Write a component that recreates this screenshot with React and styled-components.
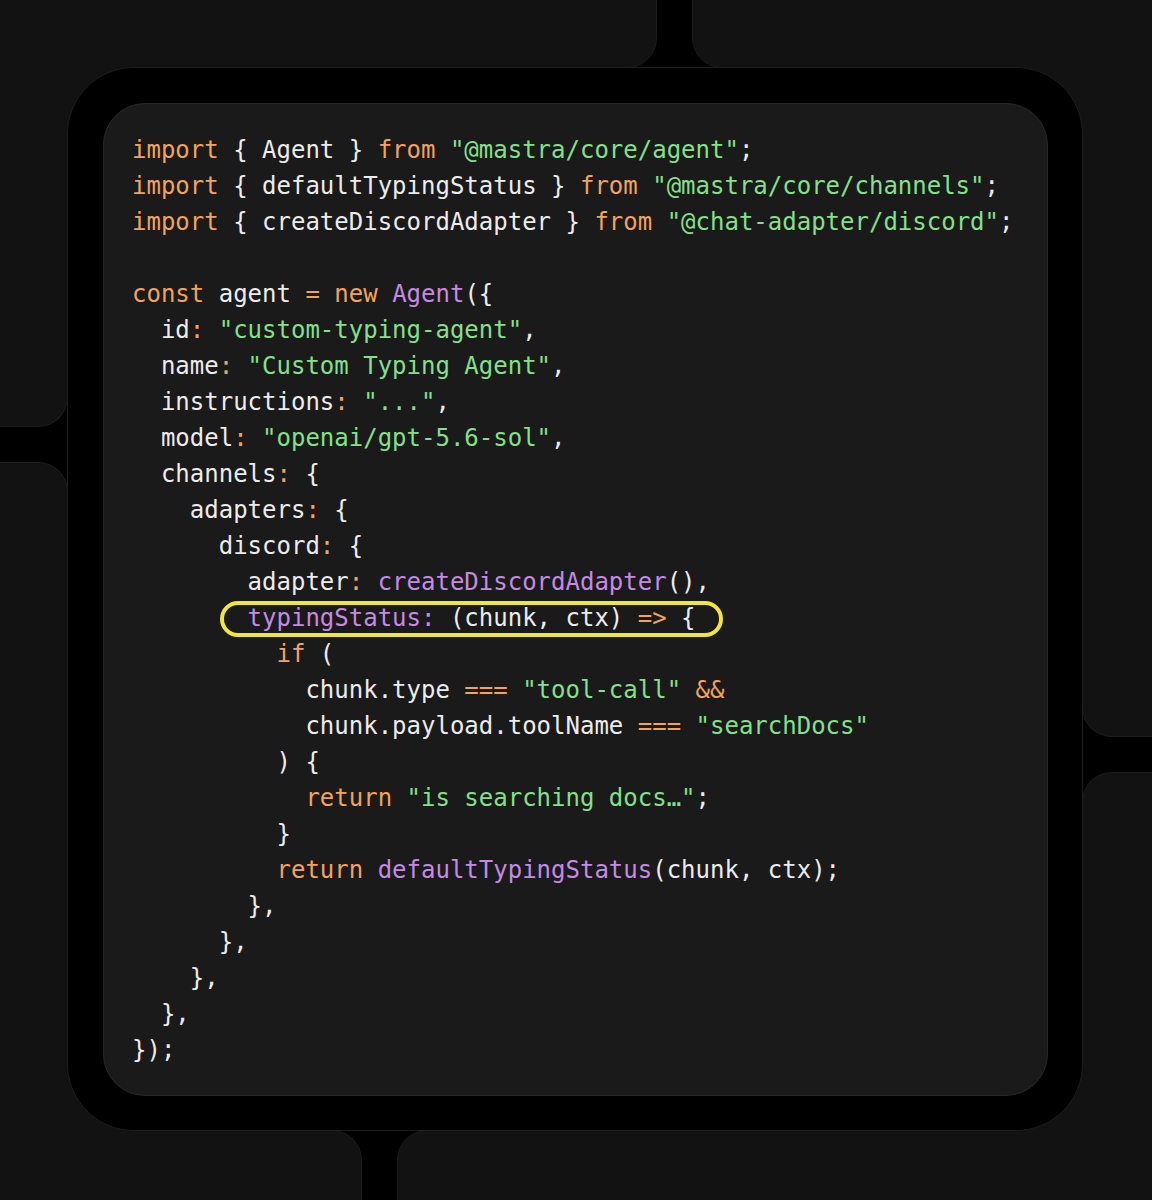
import React from 'react'
import styled, { createGlobalStyle, css } from 'styled-components'

const GlobalStyle = createGlobalStyle`
  html, body {
    margin: 0;
    padding: 0;
    background: #000;
  }
`

// each line of the snippet, as [kind, text] tokens
const code = [
  [['k', 'import'], ['p', ' { Agent } '], ['k', 'from'], ['p', ' '], ['s', '"@mastra/core/agent"'], ['p', ';']],
  [['k', 'import'], ['p', ' { defaultTypingStatus } '], ['k', 'from'], ['p', ' '], ['s', '"@mastra/core/channels"'], ['p', ';']],
  [['k', 'import'], ['p', ' { createDiscordAdapter } '], ['k', 'from'], ['p', ' '], ['s', '"@chat-adapter/discord"'], ['p', ';']],
  [],
  [['k', 'const'], ['p', ' agent '], ['k', '='], ['p', ' '], ['k', 'new'], ['p', ' '], ['f', 'Agent'], ['p', '({']],
  [['p', '  id'], ['k', ':'], ['p', ' '], ['s', '"custom-typing-agent"'], ['p', ',']],
  [['p', '  name'], ['k', ':'], ['p', ' '], ['s', '"Custom Typing Agent"'], ['p', ',']],
  [['p', '  instructions'], ['k', ':'], ['p', ' '], ['s', '"..."'], ['p', ',']],
  [['p', '  model'], ['k', ':'], ['p', ' '], ['s', '"openai/gpt-5.6-sol"'], ['p', ',']],
  [['p', '  channels'], ['k', ':'], ['p', ' {']],
  [['p', '    adapters'], ['k', ':'], ['p', ' {']],
  [['p', '      discord'], ['k', ':'], ['p', ' {']],
  [['p', '        adapter'], ['k', ':'], ['p', ' '], ['f', 'createDiscordAdapter'], ['p', '(),']],
  'highlight',
  [['p', '          '], ['k', 'if'], ['p', ' (']],
  [['p', '            chunk.type '], ['k', '==='], ['p', ' '], ['s', '"tool-call"'], ['p', ' '], ['k', '&&']],
  [['p', '            chunk.payload.toolName '], ['k', '==='], ['p', ' '], ['s', '"searchDocs"']],
  [['p', '          ) {']],
  [['p', '            '], ['k', 'return'], ['p', ' '], ['s', '"is searching docs…"'], ['p', ';']],
  [['p', '          }']],
  [['p', '          '], ['k', 'return'], ['p', ' '], ['f', 'defaultTypingStatus'], ['p', '(chunk, ctx);']],
  [['p', '        },']],
  [['p', '      },']],
  [['p', '    },']],
  [['p', '  },']],
  [['p', '});']],
]

const tiles = [
  { area: '1 / 1 / 2 / 5', m: '-40px 0 0 -40px', r: '30px' },
  { area: '2 / 1 / 3 / 2', m: '-2px 0 0 -40px', r: '0 0 30px 0', cut: 'top' },
  { area: '1 / 6 / 2 / 8', m: '-40px -40px 0 0', r: '30px' },
  { area: '2 / 7 / 5 / 8', m: '-2px -40px 0 0', r: '0 0 0 30px', cut: 'top' },
  { area: '7 / 1 / 8 / 3', m: '0 0 -40px -40px', r: '30px' },
  { area: '4 / 1 / 7 / 2', m: '0 0 -2px -40px', r: '0 30px 0 0', cut: 'bottom' },
  { area: '7 / 4 / 8 / 8', m: '0 -40px -40px 0', r: '30px' },
  { area: '6 / 7 / 7 / 8', m: '0 -40px -2px 0', r: '30px 0 0 0', cut: 'bottom' },
]

export default function App() {
  return (
    <>
      <GlobalStyle />
      <Page>
        {tiles.map((t, i) => (
          <Tile key={i} $area={t.area} $m={t.m} $r={t.r} $cut={t.cut} />
        ))}
        <FrameCell>
          <Frame>
            <Card>
              {code.map((line, i) =>
                line === 'highlight' ? (
                  <Line key={i}>
                    {'        '}
                    <Ring>
                      <Token $kind="f">typingStatus:</Token>
                      <Token $kind="p"> (chunk, ctx) </Token>
                      <Token $kind="k">=&gt;</Token>
                      <Token $kind="p"> {'{'}</Token>
                    </Ring>
                  </Line>
                ) : (
                  <Line key={i}>
                    {line.map(([kind, text], j) => (
                      <Token key={j} $kind={kind}>{text}</Token>
                    ))}
                  </Line>
                )
              )}
            </Card>
          </Frame>
        </FrameCell>
      </Page>
    </>
  )
}

const Page = styled.div`
    width: 1152px;
    height: 1200px;
    overflow: hidden;
    background: #000;
    display: grid;
    grid-template-columns: 68px 294px 35px 260px 35px 390px 70px;
    grid-template-rows: 68px 359px 35px 275px 35px 358px 70px;
`

const Tile = styled.div`
    grid-area: ${props => props.$area};
    margin: ${props => props.$m};
    border-radius: ${props => props.$r};
    background: #121212;
    border: 1px solid #1c1c1c;
    ${props => props.$cut === 'top' && css`border-top: none;`}
    ${props => props.$cut === 'bottom' && css`border-bottom: none;`}
`

/* tile-coloured cell under the frame, so its round corners sit on the tiles */
const FrameCell = styled.div`
    grid-area: 2 / 2 / 7 / 7;
    margin: -1px;
    background: #121212;
    display: flex;
`

const Frame = styled.div`
    flex: 1;
    display: flex;
    flex-direction: column;
    background: #000;
    border: 1px solid #1d1d1d;
    border-radius: 67px;
    padding: 35px 34px 34px 35px;
`

const Card = styled.div`
    flex: 1;
    background: #1a1a1a;
    border: 1px solid #282828;
    border-radius: 42px;
    padding: 28px 28px 27px;
    font-family: "DejaVu Sans Mono", "Liberation Mono", monospace;
    font-size: 24px;
    color: #ececec;
`

const Line = styled.div`
    height: 36px;
    line-height: 36px;
    white-space: pre;
`

const Token = styled.span`
    color: ${props => ({
      k: '#f2a35f',
      s: '#84e08a',
      f: '#c58be3',
      p: '#ececec',
    }[props.$kind])};
`

const Ring = styled.span`
    position: relative;
    &::after {
        content: '';
        position: absolute;
        left: -28px;
        right: -27px;
        top: -3px;
        bottom: -5px;
        border: 4.5px solid #f1e73c;
        border-radius: 999px;
    }
`
